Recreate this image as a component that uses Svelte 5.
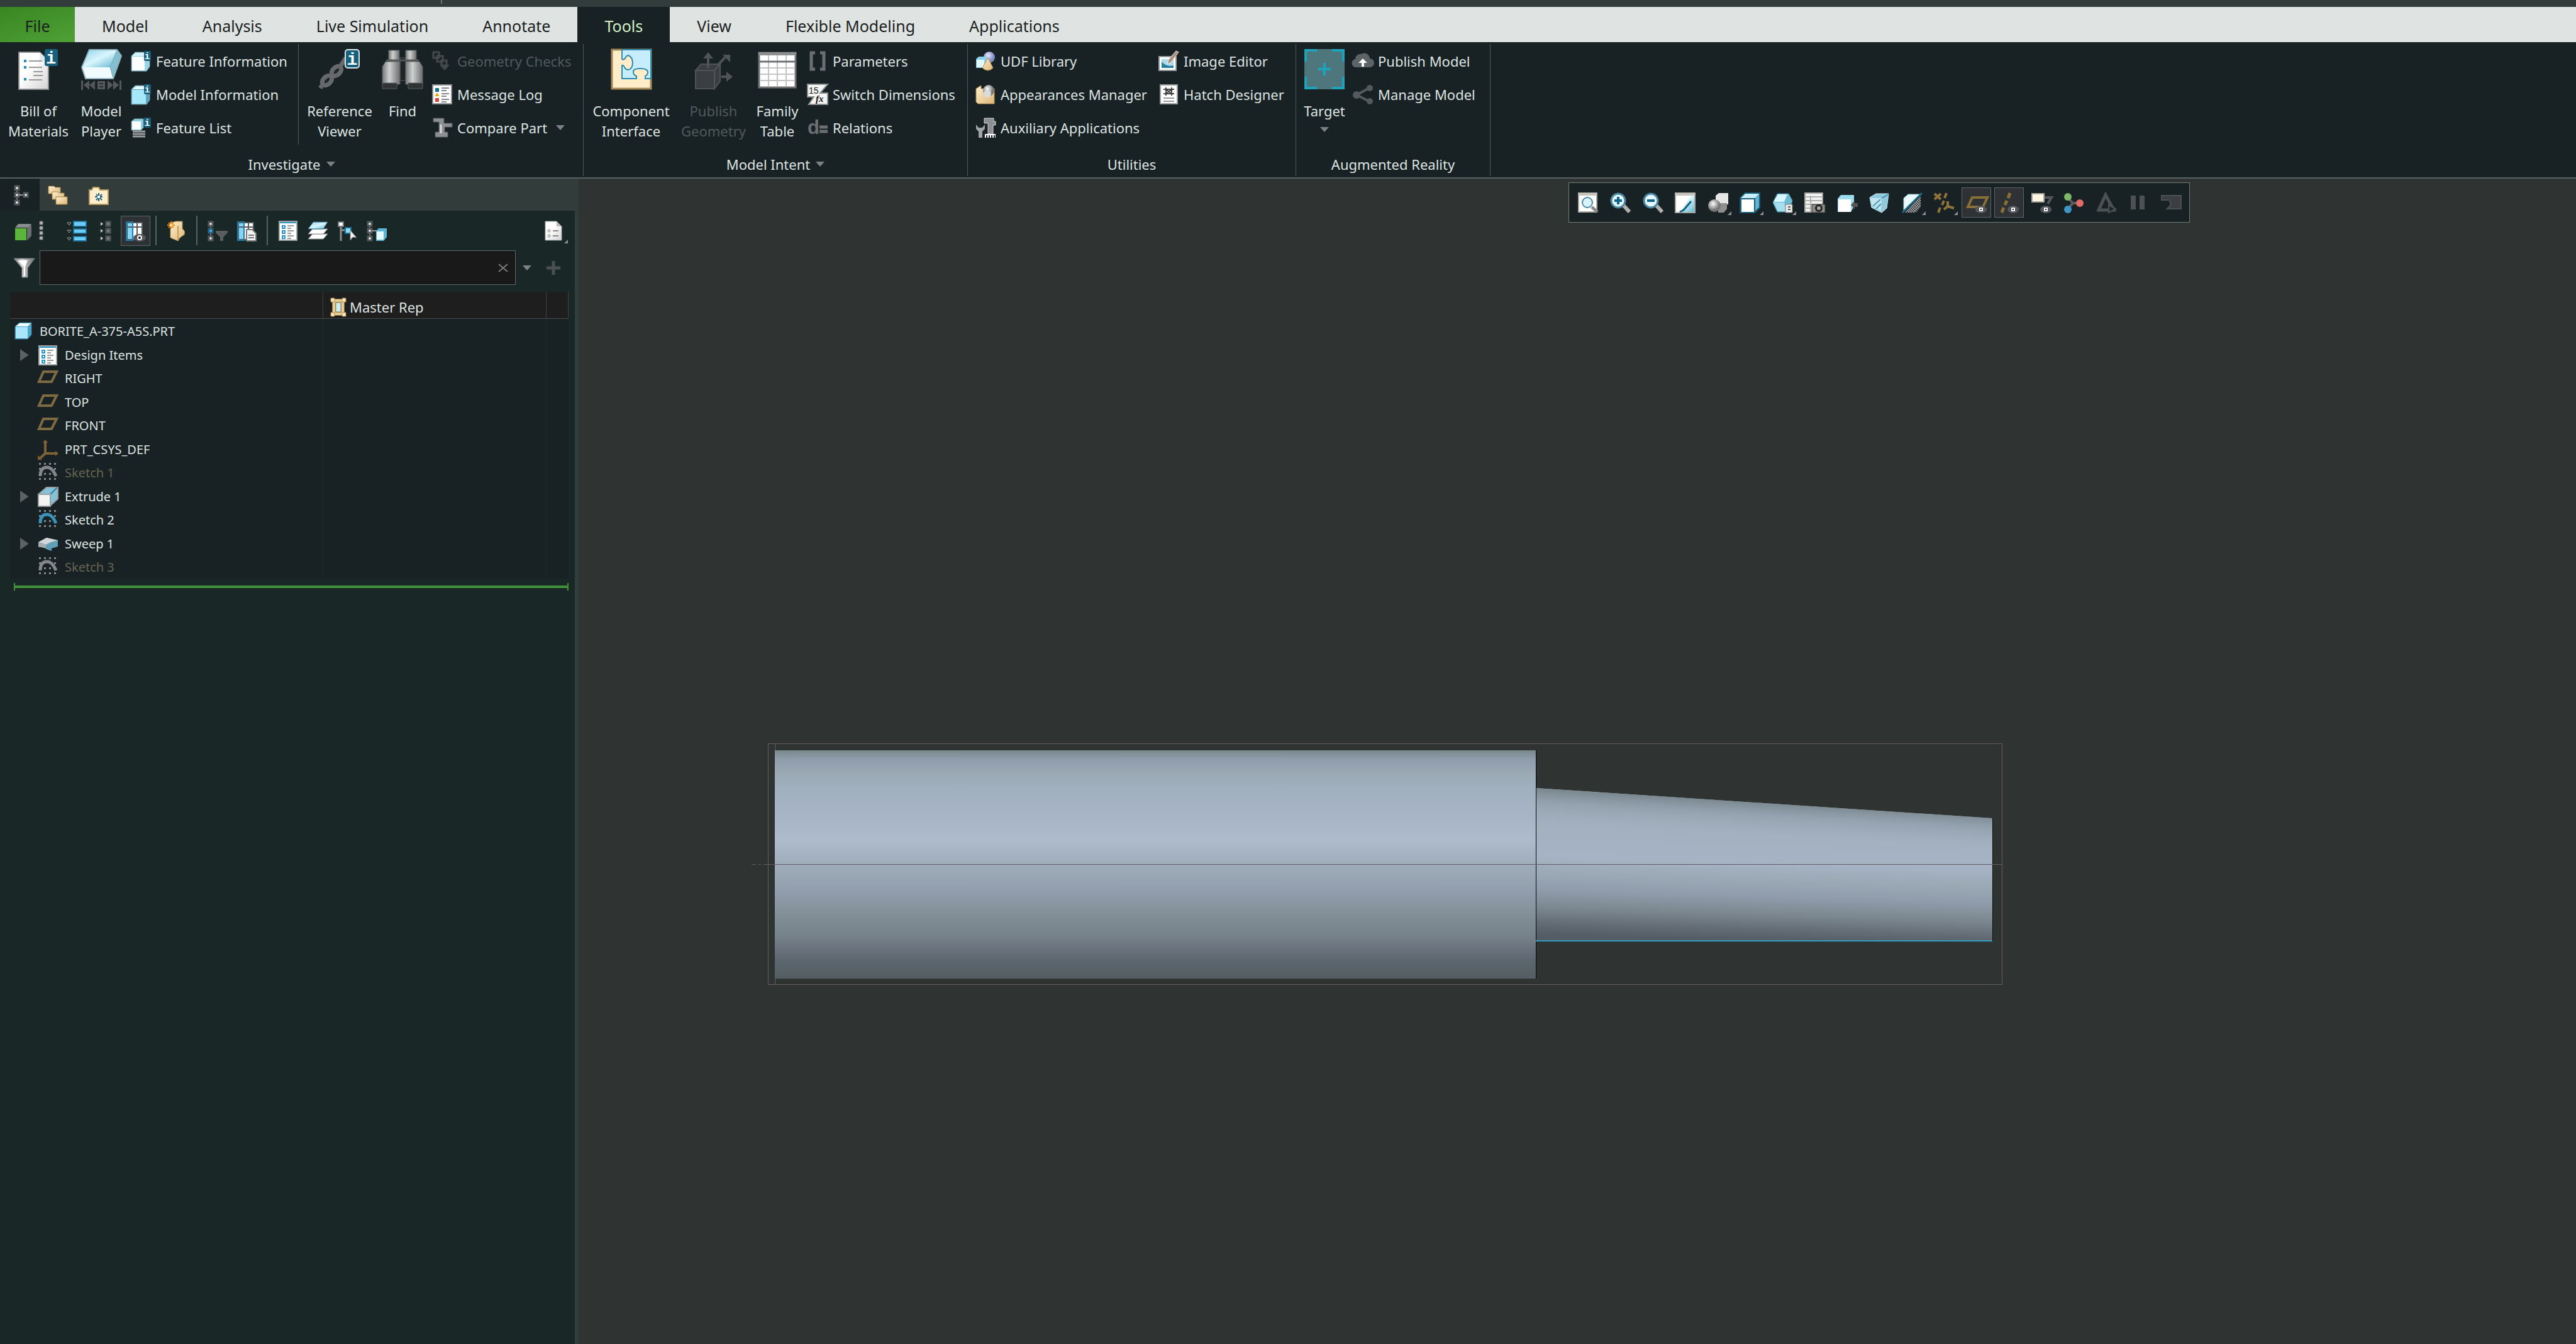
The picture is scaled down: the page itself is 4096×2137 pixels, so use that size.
<script>
  const tabs = ['File', 'Model', 'Analysis', 'Live Simulation', 'Annotate', 'Tools', 'View', 'Flexible Modeling', 'Applications'];
  let activeTab = $state('Tools');
  let filter = $state('');

  const badge = '<rect x="21" y="0" width="11" height="16" rx="2" fill="#17617f"/><text x="26" y="13" font-size="15" font-weight="700" font-family="Liberation Mono, monospace" text-anchor="middle" fill="#fff">i</text>';
  const bigBadge = '<rect x="41" y="1" width="22" height="29" rx="4" fill="#17617f" stroke="#dde4e6" stroke-width="2"/><text x="52" y="25" font-size="28" font-weight="700" font-family="Liberation Mono, monospace" text-anchor="middle" fill="#fff">i</text>';
  const eye = '<ellipse cx="23" cy="27" rx="9" ry="6" fill="#55585a"/><rect x="20" y="24" width="6" height="6" fill="#fff"/><rect x="22" y="26" width="2" height="2" fill="#111"/>';
  const corner = '<path d="M38 36h-6l6-6z" fill="#8b8f90"/>';
  const nodes = '<path d="M5 5v22" stroke="#777" stroke-width="2"/><g fill="#fff" stroke="#55585a" stroke-width="3"><rect x="2" y="2" width="6" height="6"/><rect x="2" y="13" width="6" height="6"/><rect x="2" y="25" width="6" height="6"/></g>';
  const columns = '<rect x="1" y="2" width="26" height="29" fill="#555a5d"/><path d="M3 4h7v5h-7zM3 11h7v18h-7z" fill="#83d4f7"/><path d="M12 4h5v5h-5zM19 4h6v5h-6zM12 11h5v18h-5zM19 11h6v18h-6z" fill="#fff"/><path d="M1 2h10v29h-10z" fill="none" stroke="#1f7ba8" stroke-width="2"/>';
  const sketch = (color) =>
    '<g fill="#85888a"><path d="M2 0h3v3h-3zM10 0h3v3h-3zM18 0h3v3h-3zM26 0h3v3h-3zM2 24h3v3h-3zM10 24h3v3h-3zM18 24h3v3h-3zM26 24h3v3h-3zM2 8h3v3h-3zM26 8h3v3h-3zM10 16h3v3h-3zM18 16h3v3h-3z"/></g><path d="M4 21q0-14 11-14q8 0 14 14" fill="none" stroke="' + color + '" stroke-width="5"/>';

  // 32-unit boxes for the small icons, 64-unit boxes for the large ones
  const icons = {
    bom: '<path d="M1 5h33l14 14v45H1z" fill="url(#page)" stroke="#8c8f90" stroke-width="2"/><path d="M34 5v14h14z" fill="#dfeaf0"/><path d="M9 17h4v4h-4zM9 27h4v4h-4zM9 46h4v4h-4z" fill="#1f8db5"/><path d="M17 19h21M17 29h21M24 36h15M24 42h15M17 49h21" stroke="#999" stroke-width="2"/><rect x="42" y="0" width="21" height="27" rx="3" fill="#17617f"/><text x="52" y="23" font-size="27" font-weight="700" font-family="Liberation Mono, monospace" text-anchor="middle" fill="#fff">i</text>',
    player: '<path d="M13 1h44l-11 28H1z" fill="url(#sky)"/><path d="M1 29h45l5 18H7z" fill="#f0fcff"/><path d="M57 1l7 10-13 36-5-18z" fill="#83bfd0"/><path d="M13 1h44l7 10-13 36H7L1 29z" fill="none" stroke="#8fb3be" stroke-width="2"/><g fill="#55585a"><path d="M0 50h3v15H0zM13 50v15L4 57zM22 50v15l-9-8zM26 51h12v13H26zM42 50v15l9-8zM51 50v15l9-8zM61 50h3v15h-3z"/></g><path d="M29 55h6M29 60h6" stroke="#2b3133" stroke-width="2"/>',
    refViewer: '<g fill="none" stroke="#66696c" stroke-width="7"><ellipse cx="12" cy="50" rx="9" ry="6" transform="rotate(-45 12 50)"/><ellipse cx="27" cy="35" rx="9" ry="6" transform="rotate(-45 27 35)"/><path d="M34 26l8-12M4 58l-3 4"/></g><path d="M9 50h6M12 47v6M24 35h6M27 32v6" stroke="#24292b" stroke-width="2"/>' + bigBadge,
    find: '<g stroke="#5b5e5f" stroke-width="1"><rect x="28" y="14" width="9" height="36" fill="#202426"/><rect x="10" y="2" width="17" height="18" fill="url(#metal)"/><rect x="37" y="2" width="17" height="18" fill="url(#metal)"/><path d="M5 20h23v36H0V28z" fill="url(#metal)"/><path d="M37 20h22l5 8v28H37z" fill="url(#metal)"/><path d="M0 54h23v9H0zM41 54h23v9H41z" fill="#2f3334"/></g><path d="M6 18h52" stroke="#55585a" stroke-width="3"/>',
    component: '<path d="M1 1h62v62H1z" fill="#ffecc8" stroke="#a58a57" stroke-width="3"/><path d="M17 1h46v46h-9v-4q4-2 4-6q0-6-12-6t-11 6q0 4 5 6v4H17V26q2-1 4 3q2 4 6 4q7-2 7-11t-7-12q-4 1-5 5q-3 3-5 1z" fill="#c5edfb" stroke="#2d8bb0" stroke-width="2"/>',
    geometry: '<g fill="#3b3e40" stroke="#505457" stroke-width="2"><path d="M3 34h30v29H3z"/><path d="M3 34l9-10h30l-9 10zM33 34l9-10v27l-9 12z"/></g><g stroke="#505457" stroke-width="4" fill="none"><path d="M23 30V12M38 26l14-15M44 44h10"/></g><path d="M15 15l8-10 8 10zM46 9h12v12zM52 36l10 8-10 8z" fill="#505457"/>',
    family: '<rect x="3" y="6" width="58" height="55" fill="#fff" stroke="#707375" stroke-width="3"/><path d="M2 5h60v5H2z" fill="#8d8f91"/><path d="M18 10v50M32 10v50M46 10v50M4 30h56M4 40h56M4 50h56" stroke="#c1c3c5" stroke-width="2"/><path d="M4 20h56" stroke="#707375" stroke-width="3"/>',
    target: '<path d="M0 0h64v64H0z" fill="#4d777c"/><path d="M2 20V2h18M44 2h18v18M62 44v18H44M20 62H2V44" fill="none" stroke="#1fa3bd" stroke-width="4"/><path d="M32 22v20M22 32h20" stroke="#1fa3bd" stroke-width="4"/>',
    featInfo: '<path d="M1 8l6-6h19l4 5v18l-5 7H1z" fill="#9ad6ea" stroke="#7ea3b0"/><path d="M2 9h20v22H2z" fill="#fbffff"/><path d="M2 8l6-5h17l-3 5z" fill="#d9f2fa"/>' + badge,
    modelInfo: '<path d="M1 8l6-6h19l4 5v18l-5 7H1z" fill="#5da3bd" stroke="#7ea3b0"/><path d="M2 9h22v22H2z" fill="#a6e7fa"/><path d="M2 8l6-5h17l-3 5z" fill="#e5f8fd"/>' + badge,
    featList: '<path d="M1 6l5-4h14v14l-4 4H1z" fill="#8fcde2" stroke="#7ea3b0"/><path d="M2 6h14v13H2z" fill="#fbffff"/><path d="M3 22h20M3 26h20M3 30h20" stroke="#999c9e" stroke-width="3"/>' + badge,
    checks: '<g fill="none" stroke="#43494b" stroke-width="3"><path d="M2 2h9v9H2zM8 8h9v9H8zM15 15h8v8h-8z"/></g><path d="M12 22h16l-8 9z" fill="#43494b"/>',
    log: '<rect x="1" y="1" width="30" height="30" fill="#fff" stroke="#8e9192" stroke-width="2"/><path d="M5 6h6v6H5z" fill="#14708c"/><path d="M4 19l4-6 4 6z" fill="#e6ad1c"/><path d="M5 22h6v6H5z" fill="#d4423a"/><path d="M15 6h12M15 10h8M15 15h12M15 19h8M15 24h12M15 28h8" stroke="#86898a" stroke-width="2"/>',
    compare: '<path d="M2 1h17v8h13v6H20v8h5v8H5v-8h6V7H2z" fill="#8c9092" stroke="#55585a"/><path d="M14 11v14" stroke="#d4d8da" stroke-width="3"/>',
    params: '<path d="M12 3H6v26h6M20 3h6v26h-6" fill="none" stroke="#6b6f72" stroke-width="5"/>',
    switchDim: '<path d="M0 0h32L20 14H32v18H2l8-12H0z" fill="#f4f4f2" stroke="#8f9293" stroke-width="2"/><text x="2" y="15" font-size="14" fill="#222" font-family="Liberation Sans, sans-serif">15</text><text x="13" y="28" font-size="15" font-style="italic" font-weight="700" fill="#111" font-family="Liberation Serif, serif">fx</text>',
    relations: '<text x="0" y="26" font-size="31" font-weight="700" fill="#6b6f72" font-family="Liberation Sans, sans-serif">d</text><path d="M19 15h13M19 22h13" stroke="#6b6f72" stroke-width="5"/>',
    udf: '<circle cx="22" cy="10" r="9" fill="url(#violet)"/><path d="M1 13l4-4h13v14l-3 4H1z" fill="#8ad0e8"/><path d="M2 14h12v12H2z" fill="#dff8ff"/><path d="M20 11l8 16q-8 8-17 0z" fill="url(#tan)" stroke="#b08e4e"/>',
    appearances: '<path d="M1 7l8-5v5h21v24H4l-3-3z" fill="url(#tan)" stroke="#b08e4e"/><circle cx="21" cy="10" r="9" fill="url(#ball)"/><circle cx="19" cy="15" r="6" fill="#d9dbdb"/>',
    auxiliary: '<path d="M1 11v7l4 4v10h6V22l4-4v-7l-4 5H5z" fill="#a0a4a6"/><path d="M14 1h15v5h3v6h-4v14h-8V9h-6z" fill="#8c9092" stroke="#d4d6d7"/><path d="M15 26h17v6H15z" fill="#fff"/><path d="M18 28v4M22 28v4M26 28v4M30 28v4" stroke="#222" stroke-width="2"/>',
    imageEditor: '<path d="M1 9h27v22H1z" fill="#fff" stroke="#9a9d9e" stroke-width="2"/><path d="M5 13h19v14H5z" fill="#a9dbea"/><path d="M5 17q8 9 19 6v4H5z" fill="#27809d"/><path d="M28 0l4 2-12 16-6 3 2-7z" fill="#a78f7b" stroke="#eee"/>',
    hatch: '<path d="M3 1h27v30H3z" fill="#fff" stroke="#9a9d9e" stroke-width="2"/><path d="M12 5v13M21 5v13M8 8h17M8 15h17M12 8l9 7M21 8l-9 7" stroke="#444" stroke-width="2"/><path d="M8 22h17M8 27h17" stroke="#999" stroke-width="2"/>',
    cloud: '<path d="M6 26a6 6 0 0 1-2-13a8 8 0 0 1 9-8a9 9 0 0 1 14 7a7 7 0 0 1 0 14z" fill="#5d6466"/><path d="M16 12l7 7h-5v6h-4v-6H9z" fill="#fff"/>',
    share: '<path d="M26 6L6 17l20 10" fill="none" stroke="#54595b" stroke-width="4"/><g fill="#54595b"><circle cx="27" cy="6" r="5"/><circle cx="6" cy="17" r="6"/><circle cx="27" cy="27" r="5"/></g>',
    tree: nodes + '<path d="M8 16h8" stroke="#999" stroke-width="2"/><rect x="16" y="13" width="6" height="6" fill="#fff" stroke="#55585a" stroke-width="3"/>',
    folders: '<g fill="url(#tan)" stroke="#a58547"><path d="M1 2h9l2 2h8v10H1z"/><path d="M7 11h9l2 2h8v10H7z"/><path d="M13 19h18v12H13z"/></g>',
    favorites: '<path d="M1 8h4l2-4h9l2 4h13v23H1z" fill="#ffeecb" stroke="#b59a5e" stroke-width="2"/><path d="M16 13v13M10 19h12M12 15l9 9M21 15l-9 9" stroke="#155d78" stroke-width="2"/><rect x="14" y="17" width="4" height="4" fill="#fff"/>',
    part: '<path d="M1 12h18v19H1z" fill="#5bb53b"/><path d="M1 11l5-6h21l-5 6z" fill="#8a8d8e"/><path d="M20 12l7-6v18l-7 7z" fill="#6c6f70"/>',
    dots: '<path d="M1 1h5v5H1zM1 9h5v5H1zM1 17h5v5H1zM1 25h5v5H1z" fill="#b4b6b7" stroke="#777"/>',
    expand: '<g fill="#6bcdf8" stroke="#1f7199" stroke-width="2"><path d="M11 1h20v8H11zM11 13h20v7H11zM11 25h20v7H11z"/></g><path d="M1 3l3 4 3-4zM1 15l3 4 3-4zM1 27l3 4 3-4z" fill="#111" stroke="#a9abac"/>',
    collapse: '<g fill="#8a8d8e" stroke="#55585a" stroke-width="3"><path d="M16 2h6v6h-6zM16 13h6v6h-6zM16 25h6v6h-6z"/></g><path d="M7 2l4 3-4 3zM7 13l4 3-4 3zM7 25l4 3-4 3z" fill="#fff" stroke="#55585a"/>',
    columnsEye: columns + '<ellipse cx="22" cy="27" rx="10" ry="6" fill="#55585a"/><circle cx="22" cy="27" r="4" fill="#fff"/><circle cx="22" cy="27" r="2" fill="#222"/>',
    newGroup: '<path d="M6 3l9-2h10v12q5 3 3 9l-7 5-3 5-12-5z" fill="url(#tan)" stroke="#b08e4e"/><path d="M18 8v24" stroke="#c29f5c" stroke-width="2"/><path d="M7 1v12M1 7h12M3 3l8 8M11 3l-8 8" stroke="#f08d16" stroke-width="2"/><circle cx="7" cy="7" r="2" fill="#fff4c8"/>',
    treeFilter: nodes + '<rect x="2" y="13" width="6" height="6" fill="#3aa5dc" stroke="#1f5f80" stroke-width="2"/><path d="M13 16h19v3l-7 7v6h-5v-6l-7-7z" fill="#5a5d5f"/>',
    columnsDoc: columns + '<path d="M15 14h9l6 6v12H15z" fill="#f1f1f1" stroke="#77797a" stroke-width="2"/><path d="M18 23h9M18 27h9" stroke="#777" stroke-width="2"/>',
    items: '<rect x="2" y="1" width="28" height="30" fill="#fff" stroke="#a2a5a6" stroke-width="2"/><path d="M3 3h26" stroke="#2c94c0" stroke-width="2"/><g fill="#fff" stroke="#2c94c0" stroke-width="2"><path d="M7 8h4v4H7zM7 16h4v4H7zM7 24h4v4H7z"/></g><path d="M15 8h10M15 12h6M15 16h10M15 20h6M15 24h10M15 28h6" stroke="#999" stroke-width="2"/>',
    layers: '<path d="M1 29l7-8h24l-7 8z" fill="#fff" stroke="#8a8d8e"/><path d="M1 21l7-8h24l-7 8z" fill="#fff" stroke="#8a8d8e"/><path d="M1 13l8-11h23l-7 11z" fill="url(#sky)" stroke="#2d6f88"/>',
    selectNode: '<path d="M6 8v24M6 15h8" stroke="#8a8d8e" stroke-width="3"/><path d="M2 2h8v7H2z" fill="#fff" stroke="#777" stroke-width="2"/><path d="M13 11h9v9h-9z" fill="#8bdbfa" stroke="#1c6f94" stroke-width="2"/><path d="M21 15v16l4-5 6 1z" fill="#f4f4f4" stroke="#777"/>',
    modelNode: nodes + '<path d="M8 16h8" stroke="#999" stroke-width="2"/><path d="M15 16l4-4h13v14l-5 6H15z" fill="#5db6d6"/><path d="M16 17h11v13H16z" fill="#e4faff"/>',
    settings: '<path d="M2 1h18l8 8v22H2z" fill="url(#page)" stroke="#a2a5a6"/><path d="M20 1v8h8z" fill="#b9bcbd"/><circle cx="8" cy="16" r="2" fill="none" stroke="#777"/><circle cx="8" cy="24" r="2" fill="none" stroke="#777"/><path d="M14 16h9M14 24h9" stroke="#888" stroke-width="2"/>' + corner,
    funnel: '<path d="M0 1h33L22 16v15h-9V16z" fill="url(#metal)" stroke="#888"/><path d="M6 4h16l-4 10v15h-2V14z" fill="#fff"/>',
    rep: '<path d="M7 4v25M21 4v25M2 6h24M2 27h24" stroke="#e9cc92" stroke-width="5"/><g fill="#ffe9bd" stroke="#a58547"><path d="M2 2h6v6H2zM20 2h6v6h-6zM2 25h6v6H2zM20 25h6v6h-6z"/></g><path d="M10 9h8v15h-8z" fill="#c9eef5" stroke="#a58547"/>',
    refit: '<rect x="1" y="1" width="29" height="30" fill="#fff" stroke="#a9a7a2" stroke-width="2"/><path d="M1 3h29" stroke="#c7c4be" stroke-width="4"/><circle cx="15" cy="16" r="8" fill="#d9f3fb" stroke="#4d8ba2" stroke-width="2"/><path d="M22 23l9 8" stroke="#8a8987" stroke-width="5"/>',
    zoomIn: '<path d="M21 20l10 11" stroke="#b3b1ad" stroke-width="6"/><circle cx="13" cy="13" r="11" fill="#e4f8ff" stroke="#4c88a1" stroke-width="3"/><path d="M13 7v12M7 13h12" stroke="#0e6389" stroke-width="4"/>',
    zoomOut: '<path d="M21 20l10 11" stroke="#b3b1ad" stroke-width="6"/><circle cx="13" cy="13" r="11" fill="#e4f8ff" stroke="#4c88a1" stroke-width="3"/><path d="M7 13h12" stroke="#0e6389" stroke-width="4"/>',
    repaint: '<rect x="1" y="1" width="31" height="31" fill="url(#sky)" stroke="#a9a7a2" stroke-width="2"/><path d="M2 5h24q-4 6-8 12T9 31H2z" fill="#fff"/><path d="M1 3h31" stroke="#c7c4be" stroke-width="4"/><path d="M26 14L14 28l-6 3" fill="none" stroke="#17607d" stroke-width="3"/>',
    shading: '<path d="M13 5l5-4h15v18h-9l-11-4z" fill="#e6e6e6"/><path d="M17 17h14v9l-5 6h-9z" fill="#8f8f8f"/><circle cx="11" cy="21" r="10" fill="url(#ball)"/>' + corner,
    display: '<path d="M1 9l8-8h23v23l-8 8H1z" fill="#5fb3cf" stroke="#165c78" stroke-width="2"/><path d="M2 9l7-7h22l-7 7z" fill="#c8eef8"/><path d="M2 10h22v22H2z" fill="#fff" stroke="#165c78" stroke-width="2"/>' + corner,
    orient: '<path d="M8 2h18l6 11-4 13-5 5H8L1 16z" fill="#6dbbd4" stroke="#4a93ad"/><path d="M9 3h15l-5 12H2z" fill="#d8f6fd"/><path d="M2 16h17l4 14H9z" fill="#a5dfef"/><path d="M21 19h11v13H21z" fill="#eee" stroke="#777"/><path d="M25 23h4M25 27h4" stroke="#555" stroke-width="2"/>' + corner,
    viewMgr: '<path d="M1 1h28v30H1z" fill="#f1f1f0" stroke="#a4a4a2" stroke-width="2"/><path d="M1 7h28M1 13h28M1 19h28M1 25h28M10 5v26" stroke="#b0b0ae" stroke-width="2"/><rect x="12" y="19" width="21" height="13" fill="#8e8c88" stroke="#333"/><circle cx="23" cy="25" r="6" fill="#222"/><circle cx="23" cy="25" r="3" fill="#a9a7a4"/>',
    persp: '<path d="M1 10l5-6h21v18l-5 9H1z" fill="#9bdcee"/><path d="M2 11h20v20H2z" fill="#fff"/><path d="M28 13l-6 7 6 7v-4h5v-6h-5z" fill="#555"/>',
    section: '<path d="M1 8l10-6h20l-3 23-8 7L4 24z" fill="#8fcadd" stroke="#cdeff8"/><path d="M2 9h18l-1 20L5 23z" fill="#d8f1f8" opacity=".7"/><path d="M20 9l11-6M6 22l12-11M11 26l8-8" stroke="#4a9ab5" stroke-width="2"/>',
    xsec: '<path d="M3 9l7-6h20L3 31z" fill="#e9fbff" stroke="#8fd0e2"/><path d="M30 5v18l-8 9H5z" fill="url(#mesh)"/><path d="M1 32L32 1" stroke="#1b6887" stroke-width="3"/>' + corner,
    datums: '<g fill="none" stroke="#8f713b" stroke-width="4"><path d="M1 2l10 9M11 2L1 11M20 1l-3 8M16 13l-3 7M10 24l-3 8M22 14v8l-6 5M22 22l10 3"/></g>' + corner,
    planes: '<path d="M9 8h24l-7 15H2z" fill="none" stroke="#8a6e38" stroke-width="4"/>' + eye,
    axes: '<path d="M18 1l-3 8M13 13l-3 7M8 24l-3 8" stroke="#8a6e38" stroke-width="5"/>' + eye,
    annotations: '<path d="M20 8h12l-6 10" fill="none" stroke="#55585a" stroke-width="4"/><path d="M1 2h19v13H1z" fill="#fff5e3" stroke="#aaa69f" stroke-width="2"/>' + eye,
    spin: '<path d="M7 8l8 9-8 9M15 17h8" fill="none" stroke="#5b5e60" stroke-width="4"/><circle cx="7" cy="7" r="6" fill="#7db86a"/><circle cx="26" cy="17" r="6" fill="#e36b66"/><circle cx="7" cy="27" r="6" fill="#3f96c6"/>',
    simulate: '<path d="M15 4L4 28h24z" fill="none" stroke="#4c5153" stroke-width="5"/><path d="M20 20l11 6-11 6z" fill="#1d2426" stroke="#4c5153" stroke-width="2"/>',
    pause: '<path d="M4 5h8v22H4zM18 5h8v22h-8z" fill="#4c5153"/>',
    record: '<path d="M1 5h31v21H10q10-8 2-14H1z" fill="#3b3f41" stroke="#4c5153" stroke-width="2"/>',
    prt: '<path d="M2 8l7-6h19v19l-6 7H2z" fill="#4da6cb" stroke="#3f7f9b"/><path d="M3 8l6-5h18l-5 5z" fill="#f1fcff"/><path d="M3 9h19v18H3z" fill="#a9e6fb"/>',
    plane: '<path d="M9 5h21l-8 16H2z" fill="none" stroke="#7d6a42" stroke-width="4"/>',
    csys: '<path d="M12 4v18h18M12 22L3 30" fill="none" stroke="#7d6238" stroke-width="4"/><path d="M8 5l4-5 4 5zM28 18l5 4-5 4zM0 32v-7l7 7z" fill="#7d6238"/>',
    sketchOff: sketch('#85888a'),
    sketchOn: sketch('#3a93bd'),
    extrude: '<path d="M1 12L14 1h18v18L19 31H1z" fill="#82c3db" stroke="#9b9d9e" stroke-width="2"/><path d="M31 1L20 12v19" fill="none" stroke="#39788f" stroke-width="2"/><path d="M1 12h19v19H1z" fill="#f3f3f2" stroke="#9b9d9e" stroke-width="2"/>',
    sweep: '<path d="M1 13L14 6l18 4v10l-10 3v4l-9-3v-4L1 21z" fill="#5f9fb8"/><path d="M1 13L14 6l18 4-11 3-8 4z" fill="#d3d6d7"/><path d="M1 14l12 3v6L1 20z" fill="#a9acae"/>'
  };

  const viewTools = [
    ['refit', 'Refit'], ['zoomIn', 'Zoom in'], ['zoomOut', 'Zoom out'], ['repaint', 'Repaint'],
    ['shading', 'Rendering'], ['display', 'Display style'], ['orient', 'Saved orientations'], ['viewMgr', 'View manager'],
    ['persp', 'View normal'], ['section', 'Perspective'], ['xsec', 'Sections'], ['datums', 'Datum display'],
    ['planes', 'Plane display', true], ['axes', 'Axis display', true], ['annotations', 'Annotation display'],
    ['spin', 'Spin center'], ['simulate', 'Simulate'], ['pause', 'Pause'], ['record', 'Clip']
  ];

  const tree = [
    { name: 'BORITE_A-375-A5S.PRT', icon: 'prt', root: true },
    { name: 'Design Items', icon: 'items', open: true },
    { name: 'RIGHT', icon: 'plane' },
    { name: 'TOP', icon: 'plane' },
    { name: 'FRONT', icon: 'plane' },
    { name: 'PRT_CSYS_DEF', icon: 'csys' },
    { name: 'Sketch 1', icon: 'sketchOff', hidden: true },
    { name: 'Extrude 1', icon: 'extrude', open: true },
    { name: 'Sketch 2', icon: 'sketchOn' },
    { name: 'Sweep 1', icon: 'sweep', open: true },
    { name: 'Sketch 3', icon: 'sketchOff', hidden: true }
  ];
</script>

{#snippet icon(name)}
  <svg class="icon" viewBox="0 0 32 32" aria-hidden="true">{@html icons[name]}</svg>
{/snippet}

{#snippet large(name, lines, disabled = false)}
  <button class="large" {disabled}>
    <svg class="icon-lg" viewBox="0 0 64 64" aria-hidden="true">{@html icons[name]}</svg>
    {#each lines as line}<span>{line}</span>{/each}
    {#if name === 'target'}<i class="arrow"></i>{/if}
  </button>
{/snippet}

{#snippet small(name, label, disabled = false, arrow = false)}
  <button class="small" {disabled}>
    {@render icon(name)}<span>{label}</span>{#if arrow}<i class="arrow"></i>{/if}
  </button>
{/snippet}

{#snippet tool(name, label, pressed = false)}
  <button class="tool" class:pressed aria-label={label}>{@render icon(name)}</button>
{/snippet}

<svg class="defs" width="0" height="0" aria-hidden="true">
  <defs>
    <linearGradient id="page" x1="0" y1="0" x2="1" y2="1"><stop offset=".4" stop-color="#fff" /><stop offset="1" stop-color="#d3d3d3" /></linearGradient>
    <linearGradient id="sky" x1="0" y1="0" x2="1" y2="1"><stop offset="0" stop-color="#8ed3ea" /><stop offset=".5" stop-color="#d9f6fd" /><stop offset="1" stop-color="#5cb3cf" /></linearGradient>
    <linearGradient id="metal"><stop offset="0" stop-color="#77797a" /><stop offset=".4" stop-color="#d0d1d1" /><stop offset="1" stop-color="#6b6d6e" /></linearGradient>
    <linearGradient id="tan" x1="0" y1="0" x2="1" y2="1"><stop offset="0" stop-color="#fff0cf" /><stop offset="1" stop-color="#dcb676" /></linearGradient>
    <radialGradient id="violet" cx=".4" cy=".35"><stop offset="0" stop-color="#e6eaff" /><stop offset="1" stop-color="#7d8ac4" /></radialGradient>
    <radialGradient id="ball" cx=".4" cy=".35"><stop offset="0" stop-color="#fff" /><stop offset="1" stop-color="#757575" /></radialGradient>
    <pattern id="mesh" width="4" height="4" patternUnits="userSpaceOnUse"><path d="M0 0h4v4H0z" fill="#383c3e" /><path d="M0 0h2v2H0zM2 2h2v2H2z" fill="#a9a9a9" /></pattern>
  </defs>
</svg>

<div class="app">
  <div class="titlebar"></div>

  <nav class="tabs">
    {#each tabs as tab}
      <button class="tab" class:file={tab === 'File'} class:active={tab === activeTab} onclick={() => (activeTab = tab)}>{tab}</button>
    {/each}
  </nav>

  <section class="ribbon">
    <div class="group">
      <div class="tools">
        <div class="block">
          {@render large('bom', ['Bill of', 'Materials'])}
          {@render large('player', ['Model', 'Player'])}
          <div class="stack">
            {@render small('featInfo', 'Feature Information')}
            {@render small('modelInfo', 'Model Information')}
            {@render small('featList', 'Feature List')}
          </div>
        </div>
        <div class="block second">
          {@render large('refViewer', ['Reference', 'Viewer'])}
          {@render large('find', ['Find'])}
          <div class="stack">
            {@render small('checks', 'Geometry Checks', true)}
            {@render small('log', 'Message Log')}
            {@render small('compare', 'Compare Part', false, true)}
          </div>
        </div>
      </div>
      <button class="caption">Investigate<i class="arrow"></i></button>
    </div>

    <div class="group intent">
      <div class="tools">
        {@render large('component', ['Component', 'Interface'])}
        {@render large('geometry', ['Publish', 'Geometry'], true)}
        {@render large('family', ['Family', 'Table'])}
        <div class="stack">
          {@render small('params', 'Parameters')}
          {@render small('switchDim', 'Switch Dimensions')}
          {@render small('relations', 'Relations')}
        </div>
      </div>
      <button class="caption">Model Intent<i class="arrow"></i></button>
    </div>

    <div class="group utilities">
      <div class="tools">
        <div class="stack">
          {@render small('udf', 'UDF Library')}
          {@render small('appearances', 'Appearances Manager')}
          {@render small('auxiliary', 'Auxiliary Applications')}
        </div>
        <div class="stack">
          {@render small('imageEditor', 'Image Editor')}
          {@render small('hatch', 'Hatch Designer')}
        </div>
      </div>
      <div class="caption">Utilities</div>
    </div>

    <div class="group reality">
      <div class="tools">
        {@render large('target', ['Target'])}
        <div class="stack">
          {@render small('cloud', 'Publish Model')}
          {@render small('share', 'Manage Model')}
        </div>
      </div>
      <div class="caption">Augmented Reality</div>
    </div>
  </section>

  <div class="workspace">
    <aside class="panel">
      <div class="panel-tabs">
        <button class="panel-tab current" aria-label="Model tree">{@render icon('tree')}</button>
        <button class="panel-tab" aria-label="Folder browser">{@render icon('folders')}</button>
        <button class="panel-tab" aria-label="Favorites">{@render icon('favorites')}</button>
      </div>

      <div class="panel-tools">
        <button class="part-menu" aria-label="Part">{@render icon('part')}{@render icon('dots')}</button>
        {@render tool('expand', 'Expand all')}
        {@render tool('collapse', 'Collapse all')}
        {@render tool('columnsEye', 'Show columns', true)}
        <span class="sep"></span>
        {@render tool('newGroup', 'New group')}
        <span class="sep"></span>
        {@render tool('treeFilter', 'Tree filters')}
        {@render tool('columnsDoc', 'Tree columns')}
        <span class="sep"></span>
        {@render tool('items', 'Design items')}
        {@render tool('layers', 'Layers')}
        {@render tool('selectNode', 'Auto locate')}
        {@render tool('modelNode', 'Model in tree')}
        <div class="push">{@render tool('settings', 'Settings')}</div>
      </div>

      <div class="search">
        {@render icon('funnel')}
        <div class="search-box">
          <input type="text" aria-label="Filter tree" bind:value={filter} />
          <button class="clear" aria-label="Clear" onclick={() => (filter = '')}>
            <svg width="16" height="14" viewBox="0 0 16 14"><path d="M1 1l14 12M15 1L1 13" stroke="#777b7c" stroke-width="2" /></svg>
          </button>
        </div>
        <button class="drop" aria-label="Filter options"><i class="arrow"></i></button>
        <button class="add" aria-label="Add">
          <svg width="22" height="22" viewBox="0 0 22 22"><path d="M11 0v22M0 11h22" stroke="#4b5152" stroke-width="5" /></svg>
        </button>
      </div>

      <table class="tree">
        <colgroup><col class="col-name" /><col class="col-rep" /><col class="col-end" /></colgroup>
        <thead>
          <tr><th></th><th><div class="cell rep">{@render icon('rep')}Master Rep</div></th><th></th></tr>
        </thead>
        <tbody>
          {#each tree as row}
            <tr>
              <td>
                <div class="cell" class:root={row.root} class:hidden={row.hidden}>
                  {#if !row.root}<span class="twist" class:on={row.open}></span>{/if}
                  {@render icon(row.icon)}<span>{row.name}</span>
                </div>
              </td>
              <td></td>
              <td class="last"></td>
            </tr>
          {/each}
        </tbody>
      </table>
      <div class="insert"></div>
    </aside>

    <main class="canvas">
      <div class="view-tools">
        {#each viewTools as [name, label, pressed]}
          {@render tool(name, label, pressed)}
        {/each}
      </div>

      <svg class="model" viewBox="0 0 3176 1853" role="img" aria-label="Part model">
        <defs>
          <linearGradient id="body" x1="0" y1="0" x2="0" y2="1">
            <stop offset="0" stop-color="#79878b" />
            <stop offset=".04" stop-color="#909dac" />
            <stop offset=".11" stop-color="#9caab5" />
            <stop offset=".17" stop-color="#a1b0bf" />
            <stop offset=".28" stop-color="#a7b4c5" />
            <stop offset=".4" stop-color="#aebbcb" />
            <stop offset=".47" stop-color="#a3b0c0" />
            <stop offset=".53" stop-color="#9ca9b5" />
            <stop offset=".62" stop-color="#919dac" />
            <stop offset=".72" stop-color="#838f97" />
            <stop offset=".8" stop-color="#78848c" />
            <stop offset=".87" stop-color="#6a737d" />
            <stop offset=".93" stop-color="#5a646d" />
            <stop offset="1" stop-color="#545e62" />
          </linearGradient>
          <linearGradient id="taper" gradientUnits="userSpaceOnUse" x1="1885" y1="975" x2="1878" y2="1212">
            <stop offset="0" stop-color="#9dabb7" />
            <stop offset=".3" stop-color="#a3b1c0" />
            <stop offset=".48" stop-color="#a5b3c4" />
            <stop offset=".56" stop-color="#9eacb8" />
            <stop offset=".7" stop-color="#909cab" />
            <stop offset=".82" stop-color="#7c888f" />
            <stop offset=".92" stop-color="#646d76" />
            <stop offset="1" stop-color="#545c65" />
          </linearGradient>
          <linearGradient id="rim" gradientUnits="userSpaceOnUse" x1="1885" y1="993" x2="1882" y2="1045">
            <stop offset="0" stop-color="#79868d" stop-opacity=".9" />
            <stop offset=".4" stop-color="#8896a4" stop-opacity=".45" />
            <stop offset="1" stop-color="#9aa8b4" stop-opacity="0" />
          </linearGradient>
        </defs>
        <path class="edge" d="M301 898H2263V1281H301zM312 898V1281" stroke="#655b5e" />
        <rect x="312" y="909" width="1210" height="363" fill="url(#body)" />
        <path d="M1522 969L2248 1017V1212H1522z" fill="url(#taper)" />
        <path d="M1522 969L2248 1017V1212H1522z" fill="url(#rim)" />
        <path class="edge" d="M1522 909V1272M2248 1017V1212" stroke="#080b0c" />
        <path d="M1522 1212H2248" stroke="#2e9fb9" stroke-width="2" />
        <path class="edge" d="M275 1090h7M286 1090h4M294 1090H2263" stroke="#655d66" />
      </svg>
    </main>
  </div>
</div>

<style>
  :global(body) {
    margin: 0;
    background: #2f3332;
  }

  .app {
    min-height: 100vh;
    display: flex;
    flex-direction: column;
    font-family: 'Noto Sans', 'Open Sans', sans-serif;
    font-size: 22px;
    color: #dde2e1;
  }

  .defs {
    position: absolute;
  }

  button {
    margin: 0;
    padding: 0;
    border: 0;
    background: none;
    color: inherit;
    font: inherit;
  }

  svg {
    display: block;
    flex-shrink: 0;
    overflow: visible;
  }

  .icon {
    width: 32px;
    height: 32px;
  }

  .arrow {
    display: block;
    width: 0;
    height: 0;
    border: 7px solid transparent;
    border-top: 8px solid #7c8182;
    border-bottom: 0;
  }

  .titlebar {
    height: 11px;
    background: #323d3b;
  }

  .titlebar::before {
    content: '';
    display: block;
    width: 2px;
    height: 6px;
    margin-left: 701px;
    background: #6d7675;
  }

  /* Ribbon tabs */
  .tabs {
    height: 56px;
    display: flex;
    background: #dfe3e1;
    color: #1b1f1f;
    font-size: 25px;
  }

  .tab {
    padding: 3px 43px 0;
    white-space: nowrap;
  }

  .tab.file {
    width: 119px;
    padding: 3px 0 0;
    background: linear-gradient(160deg, #388622, #4fa136);
  }

  .tab.active {
    background: #182224;
    color: #d3efc4;
  }

  /* Ribbon */
  .ribbon {
    height: 215px;
    display: flex;
    background: #182224;
    border-bottom: 2px solid #566162;
    white-space: nowrap;
  }

  .group {
    box-sizing: border-box;
    width: 928px;
    display: flex;
    flex-direction: column;
    margin: 3px 0 2px;
    border-right: 1px solid #4d5859;
  }

  .group.intent {
    width: 611px;
  }

  .group.utilities {
    width: 522px;
  }

  .group.reality {
    width: 309px;
  }

  .tools,
  .block {
    display: flex;
    height: 160px;
  }

  .block {
    box-sizing: border-box;
    flex-shrink: 0;
    width: 474px;
    padding-left: 8px;
  }

  .block.second {
    width: 453px;
    padding-left: 12px;
    border-left: 1px solid #4d5859;
  }

  .large {
    min-width: 90px;
    padding-top: 8px;
    display: flex;
    flex-direction: column;
    align-items: center;
    line-height: 32px;
  }

  .block .large {
    width: 94px;
  }

  .block .large:first-child {
    width: 106px;
  }

  .intent .tools {
    padding-left: 10px;
  }

  .intent .large {
    width: 131px;
  }

  .intent .large:nth-child(3) {
    width: 72px;
    min-width: 72px;
    margin-right: 12px;
  }

  .icon-lg {
    width: 64px;
    height: 64px;
    margin-bottom: 18px;
  }

  .large .arrow {
    margin-top: 10px;
  }

  .stack {
    display: flex;
    flex-direction: column;
  }

  .small {
    height: 53px;
    display: flex;
    align-items: center;
    gap: 8px;
  }

  .small .arrow {
    margin-left: 6px;
  }

  button:disabled {
    color: #50595b;
  }

  .caption {
    box-sizing: border-box;
    height: 50px;
    padding-top: 12px;
    display: flex;
    align-items: center;
    justify-content: center;
    gap: 9px;
  }

  .utilities .tools {
    padding-left: 12px;
  }

  .utilities .stack:first-child {
    width: 291px;
  }

  /* Workspace */
  .workspace {
    flex: 1;
    display: grid;
    grid-template-columns: 920px 1fr;
  }

  .panel {
    background: #1a2727;
    border-right: 6px solid #323d3b;
  }

  .panel-tabs {
    height: 51px;
    display: flex;
    background: #323d3b;
  }

  .panel-tab {
    width: 65px;
    display: flex;
    align-items: center;
    padding-left: 13px;
  }

  .panel-tab.current {
    padding-left: 22px;
    width: 63px;
    background: #182224;
  }

  .panel-tab.current,
  .panel-tab {
    box-sizing: border-box;
  }

  .panel-tools {
    height: 63px;
    display: flex;
    align-items: center;
    padding-left: 23px;
  }

  .part-menu {
    width: 75px;
    display: flex;
    gap: 7px;
  }

  .tool {
    box-sizing: border-box;
    width: 47px;
    height: 48px;
    display: flex;
    align-items: center;
    justify-content: center;
    border: 1px solid transparent;
  }

  .tool.pressed {
    background: #2e3235;
    border-color: #5c6466;
  }

  .sep {
    width: 2px;
    height: 47px;
    margin: 0 8px;
    background: #5a6364;
  }

  .push {
    margin-left: auto;
    margin-right: 10px;
  }

  .search {
    display: flex;
    align-items: center;
    padding-left: 22px;
    gap: 9px;
  }

  .search-box {
    box-sizing: border-box;
    width: 757px;
    height: 55px;
    display: flex;
    align-items: center;
    background: #191919;
    border: 1px solid #5e6667;
  }

  .search-box input {
    flex: 1;
    height: 100%;
    padding: 0 10px;
    border: 0;
    outline: 0;
    background: none;
    color: #dde2e1;
    font: inherit;
  }

  .clear {
    padding: 0 11px;
  }

  .drop {
    padding: 0 15px 0 2px;
  }

  .tree {
    width: 888px;
    margin: 11px 0 0 16px;
    table-layout: fixed;
    border-collapse: separate;
    border-spacing: 0;
    background: #182224;
  }

  .col-name {
    width: 498px;
  }

  .col-rep {
    width: 355px;
  }

  .tree th {
    height: 42px;
    padding: 0;
    background: #1e1e1e;
    border-right: 1px solid #3e4445;
    border-bottom: 1px solid #454b4c;
    font-size: 22px;
    font-weight: 400;
  }

  .tree td {
    height: 38px;
    padding: 0;
    border-right: 1px solid #1d292b;
    font-size: 20px;
  }

  .tree tbody tr:nth-child(even) td {
    height: 37px;
  }

  .tree td.last {
    border-right: 0;
  }

  .cell {
    display: flex;
    align-items: center;
    gap: 11px;
    line-height: 32px;
    padding: 2px 0 0 16px;
  }

  .cell.root {
    padding-left: 6px;
    gap: 9px;
  }

  .cell.rep {
    padding: 6px 0 0 10px;
    gap: 0;
  }

  .cell.hidden {
    color: #666450;
  }

  .twist {
    width: 17px;
    height: 19px;
  }

  .twist.on {
    background: #5c6162;
    clip-path: polygon(0 0, 80% 50%, 0 100%);
  }

  /* Insertion line with a short tick at both ends */
  .insert {
    height: 12px;
    margin: 7px 10px 0 22px;
    border: solid #43923a;
    border-width: 0 2px;
    background: linear-gradient(#43923a, #43923a) center / 100% 4px no-repeat;
  }

  .canvas {
    position: relative;
    display: flex;
    background: #2f3332;
  }

  .model {
    width: 100%;
    height: auto;
    align-self: flex-start;
  }

  .edge {
    fill: none;
    stroke-width: 1px;
    shape-rendering: crispEdges;
  }

  .view-tools {
    position: absolute;
    top: 6px;
    right: 614px;
    box-sizing: border-box;
    width: 988px;
    height: 64px;
    display: flex;
    align-items: center;
    justify-content: space-between;
    padding: 0 6px;
    background: #182224;
    border: 1px solid #717876;
  }
</style>
